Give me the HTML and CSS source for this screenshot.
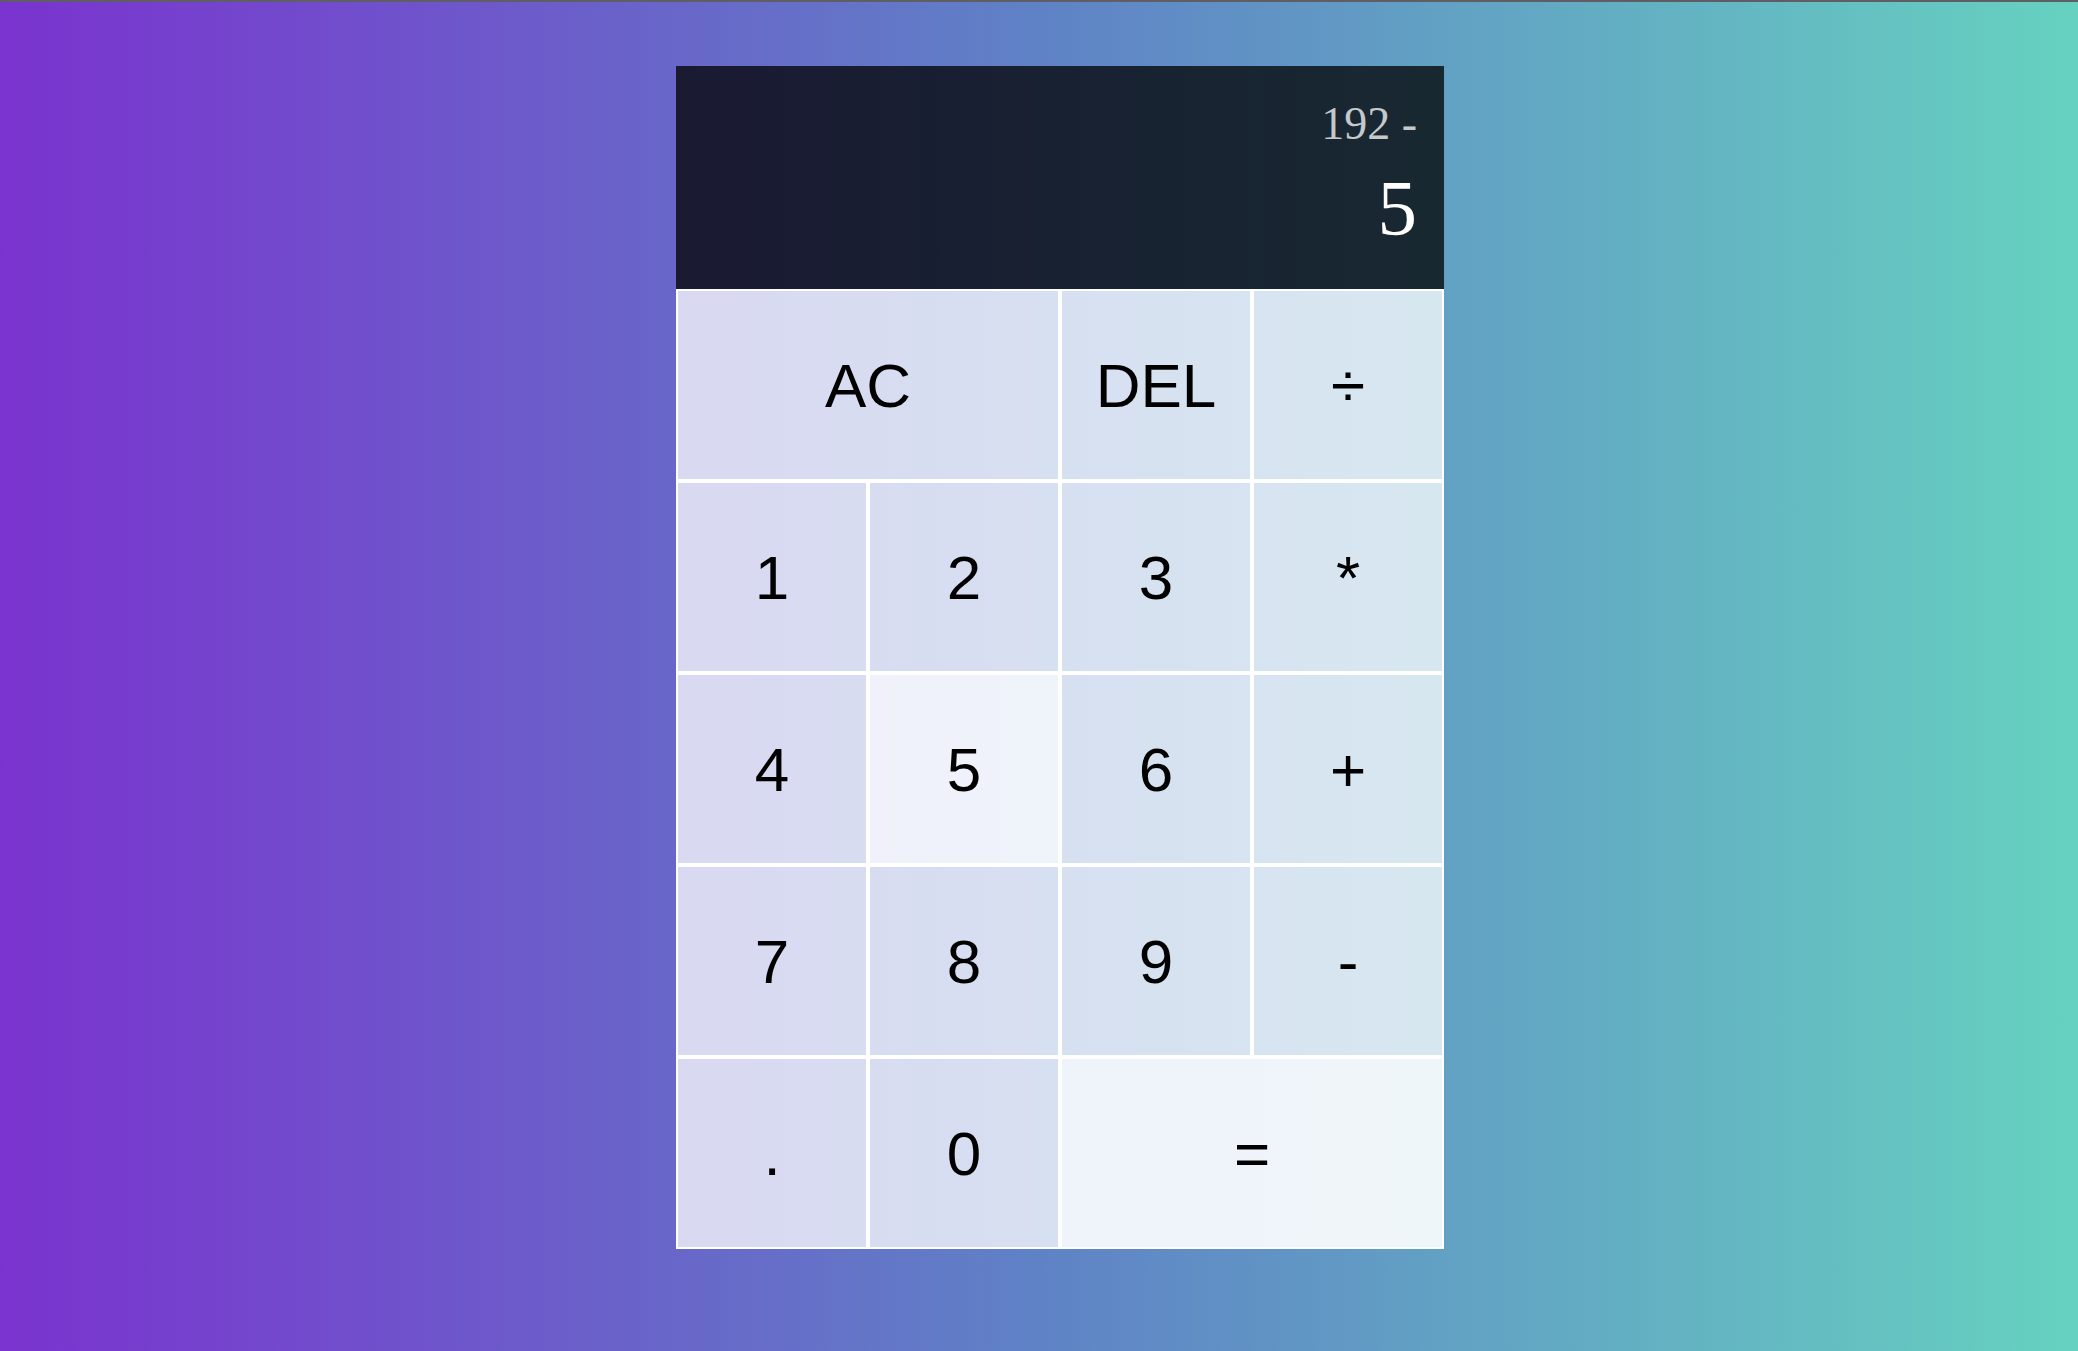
FILE: index.html
```html
<!DOCTYPE html>
<html lang="en">
<head>
<meta charset="utf-8">
<title>Calculator</title>
<link rel="stylesheet" href="styles.css">
</head>
<body>
<div class="calculator-grid">
  <div class="output">
    <div class="previous-operand">192 -</div>
    <div class="current-operand">5</div>
  </div>
  <button class="span-two">AC</button>
  <button>DEL</button>
  <button>÷</button>
  <button>1</button>
  <button>2</button>
  <button>3</button>
  <button>*</button>
  <button>4</button>
  <button class="active">5</button>
  <button>6</button>
  <button>+</button>
  <button>7</button>
  <button>8</button>
  <button>9</button>
  <button>-</button>
  <button>.</button>
  <button>0</button>
  <button class="span-two active">=</button>
</div>
</body>
</html>
```
FILE: styles.css
```css
*, *::before, *::after {
  box-sizing: border-box;
}

html, body {
  margin: 0;
  padding: 0;
}

body {
  min-height: 100vh;
  border-top: 2px solid #5e5e64;
  background: linear-gradient(to right, #7a33cf 0%, #5f82c6 50%, #66d1c0 100%);
  font-family: "Liberation Serif", "Times New Roman", serif;
}

.calculator-grid {
  display: grid;
  justify-content: center;
  grid-template-columns: repeat(4, 192px);
  grid-template-rows: 223px repeat(5, 192px);
  padding-top: 64px;
  padding-left: 42px;
}

.calculator-grid > button {
  font-family: "Liberation Sans", Arial, sans-serif;
  font-size: 62px;
  font-weight: normal;
  color: #000;
  border: 2px solid #fff;
  outline: none;
  padding: 0;
  margin: 0;
  background-color: rgba(255, 255, 255, 0.75);
}

.calculator-grid > button.active {
  background-color: rgba(255, 255, 255, 0.9);
}

.span-two {
  grid-column: span 2;
}

.output {
  grid-column: 1 / -1;
  background-color: rgba(0, 0, 0, 0.75);
  display: flex;
  flex-direction: column;
  align-items: flex-end;
  justify-content: flex-start;
  padding: 31px 27px 0 19px;
}

.previous-operand {
  color: rgba(255, 255, 255, 0.75);
  font-size: 46px;
}

.current-operand {
  color: #fff;
  font-size: 79px;
  margin-top: 13px;
}
```
